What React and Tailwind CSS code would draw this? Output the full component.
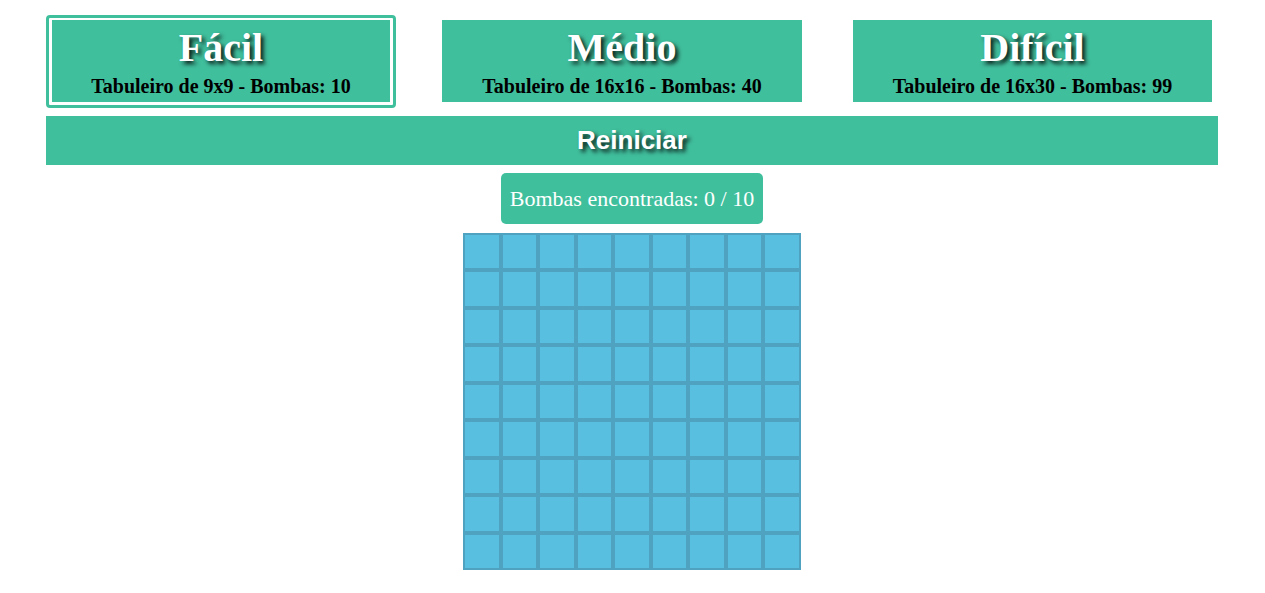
const GREEN = 'bg-[#40bf9d]';

function Nivel({ titulo, info }) {
  return (
    <div className={`${GREEN} h-[82px] flex flex-col items-center pt-[6px] cursor-pointer`}>
      <h1 className="text-[40px] leading-[44px] font-bold text-white [text-shadow:3px_3px_4px_rgba(0,0,0,0.85)]">
        {titulo}
      </h1>
      <p className="mt-[5px] text-[20px] leading-[22px] font-bold text-black">{info}</p>
    </div>
  );
}

export default function App() {
  const celulas = Array.from({ length: 81 }, (_, i) => i);

  return (
    <div className="w-[1265px] min-h-[593px] bg-white pt-[15px] font-['Liberation_Serif','Times_New_Roman',serif]">
      <div className="w-[1172px] ml-[46px]">
        {/* niveis */}
        <div className="flex items-start">
          <div className="w-[350px] border-[3px] border-[#40bf9d] rounded-[4px] px-[3px] pt-[2px] pb-[3px]">
            <Nivel titulo="Fácil" info="Tabuleiro de 9x9 - Bombas: 10" />
          </div>
          <div className="w-[360px] ml-[46px] mt-[5px]">
            <Nivel titulo="Médio" info="Tabuleiro de 16x16 - Bombas: 40" />
          </div>
          <div className="w-[359px] ml-[51px] mt-[5px]">
            <Nivel titulo="Difícil" info="Tabuleiro de 16x30 - Bombas: 99" />
          </div>
        </div>

        <button
          className={`${GREEN} mt-[8px] w-full h-[49px] flex items-center justify-center text-white text-[26px] font-bold font-['Liberation_Sans',Arial,sans-serif] [text-shadow:3px_3px_4px_rgba(0,0,0,0.85)]`}
        >
          Reiniciar
        </button>

        <div className="flex flex-col items-center">
          <div className={`${GREEN} mt-[8px] h-[51px] px-[9px] rounded-[5px] flex items-center text-white text-[22px]`}>
            Bombas encontradas: 0 / 10
          </div>

          <div className="mt-[9px] w-[338px] grid grid-cols-9">
            {celulas.map((c) => (
              <div key={c} className="h-[37.45px] bg-[#58bfe0] border-2 border-[#4fa3c1]" />
            ))}
          </div>
        </div>
      </div>
    </div>
  );
}
